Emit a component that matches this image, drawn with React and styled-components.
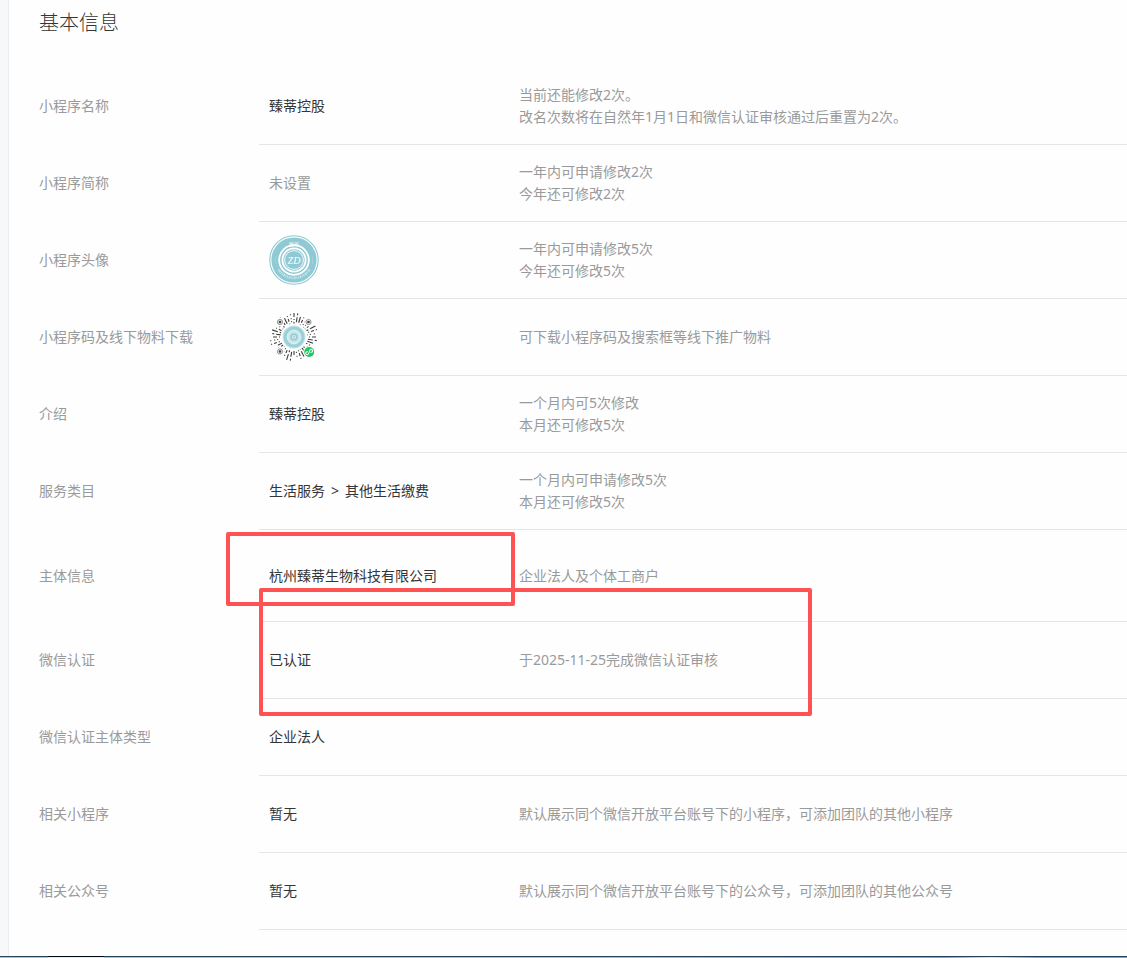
import React from 'react'

import styled, { createGlobalStyle } from 'styled-components'

const GlobalStyle = createGlobalStyle`
  * {
    box-sizing: border-box;
  }
  body {
    margin: 0;
    background: #f7f8fa;
    color: #353535;
    font: 14px/22px 'Noto Sans', 'Noto Sans CJK SC', sans-serif;
  }
`

const Page = styled.div`
  display: flex;
  flex-direction: column;
  min-height: 100vh;
`

const Panel = styled.main`
  flex: 1;
  margin-left: 8px;
  padding: 8px 0 26px 30px;
  border-left: 1px solid #ebedf0;
  background: #fefefe;
`

const Title = styled.h1`
  margin: 0 0 30px;
  font-size: 20px;
  line-height: 30px;
  font-weight: 300;
`

const List = styled.dl`
  margin: 0;
`

const Row = styled.div`
  display: flex;
  align-items: stretch;
  min-height: ${(props) => (props.$tall ? 92 : 77)}px;
`

const Label = styled.dt`
  width: 220px;
  flex: none;
  display: flex;
  align-items: center;
  border-bottom: 1px solid transparent;
  color: #9a9a9a;
`

const Value = styled.dd`
  position: relative;
  width: 250px;
  flex: none;
  margin: 0;
  padding: 0 10px;
  display: flex;
  align-items: center;
  border-bottom: 1px solid #e4e5e8;
  color: ${(props) => (props.$muted ? '#9a9a9a' : '#353535')};
`

const Separator = styled.span`
  margin: 0 6px;
`

const Note = styled.dd`
  flex: 1;
  min-width: 1px;
  margin: 0;
  padding-left: 10px;
  display: flex;
  flex-direction: column;
  justify-content: center;
  border-bottom: 1px solid #e4e5e8;
  color: #9a9a9a;
`

const Mark = styled.span`
  position: absolute;
  z-index: 1;
  top: ${(props) => props.$top}px;
  left: ${(props) => props.$left}px;
  width: ${(props) => props.$width}px;
  height: ${(props) => props.$height}px;
  border: 4px solid #ff5252;
  border-radius: 2px;
  pointer-events: none;
`

const Edge = styled.footer`
  display: flex;
  height: 2px;
  border-top: 1px solid #24445a;
  background: linear-gradient(90deg, #9fc9d6, #a5c5dd 50%, #7aa3cf 84%, #dbe7ee 88%, #7aa3cf 92%);
`

const EdgeTab = styled.span`
  width: 56px;
  height: 2px;
  margin: -1px 0 0 48px;
  border-top: 1px solid #05090c;
  background: #dfeef5;
`

const Logo = () => (
  <svg width="50" height="50" viewBox="0 0 50 50" role="img" aria-label="小程序头像">
    <circle cx="25" cy="25" r="24.2" fill="#fff" stroke="#8fc9d3" strokeWidth="1.1" />
    <circle cx="25" cy="25" r="22.6" fill="#8fc9d3" />
    <circle cx="25" cy="25" r="14.8" fill="none" stroke="#fff" strokeWidth="1.8" />
    <circle cx="25" cy="25" r="11.6" fill="none" stroke="#fff" strokeWidth="1.8" />
    <circle cx="25" cy="25" r="9.4" fill="none" stroke="#fff" strokeWidth="0.9" />
    {/* lettering round the lower half of the band */}
    <path
      d="M9.500 34.500a18.500 18.500 0 0 0 31 0"
      fill="none"
      stroke="#c9e6eb"
      strokeWidth="2.6"
      strokeDasharray="1 0.8 1.4 0.7 0.8 0.9"
    />
    <path
      d="M6.500 22v7M43.500 22v7"
      stroke="#b5dde3"
      strokeWidth="0.8"
      strokeDasharray="1 1"
    />
    <text
      x="25"
      y="10.500"
      textAnchor="middle"
      fontSize="5"
      fill="#fff"
      fontFamily="Noto Sans CJK SC"
    >
      臻蒂
    </text>
    <text
      x="25"
      y="28.500"
      textAnchor="middle"
      fontSize="10"
      fontStyle="italic"
      fill="#fff"
      fontFamily="Liberation Serif"
    >
      ZD
    </text>
  </svg>
)

const rays = Array.from({ length: 40 }, (_, i) => ({
  angle: i * 9,
  dash: ['4 2 1 2', '1 2 3 2', '2 2 5 2', '1 3 1 2', '6 2 2 1'][(i * 7) % 5],
  end: [24, 20, 22, 24, 18, 23, 21][(i * 3) % 7],
}))

const Code = () => (
  <svg width="50" height="50" viewBox="0 0 50 50" role="img" aria-label="小程序码">
    <g stroke="#3c3c3c" strokeWidth="1.1" strokeLinecap="butt">
      {rays.map(({ angle, dash, end }) => (
        <line
          key={angle}
          x1="25"
          y1={25 - end}
          x2="25"
          y2="11.500"
          strokeDasharray={dash}
          transform={`rotate(${angle} 25 25)`}
        />
      ))}
    </g>
    {[[11, 10], [39.5, 10], [11, 39.5]].map(([x, y]) => (
      <g key={`${x}-${y}`}>
        <circle cx={x} cy={y} r="4.200" fill="#fff" />
        <circle cx={x} cy={y} r="2.600" fill="#eee" stroke="#888" strokeWidth="0.9" />
        <circle cx={x} cy={y} r="1.300" fill="#444" />
      </g>
    ))}
    <circle cx="25" cy="25" r="12.500" fill="#fff" />
    <circle cx="25" cy="25" r="11.500" fill="#c6e5ea" />
    <circle cx="25" cy="25" r="9" fill="none" stroke="#9bd0d9" strokeWidth="3" />
    <circle cx="25" cy="25" r="6.300" fill="none" stroke="#e4f4f6" />
    <circle cx="25" cy="25" r="3.800" fill="#8fc9d3" stroke="#b5dde3" />
    <circle cx="25" cy="25" r="1.700" fill="#a9d8df" stroke="#e4f4f6" strokeWidth="0.7" />
    <circle cx="40.200" cy="40" r="6" fill="#fff" />
    <circle cx="40.200" cy="40" r="5" fill="#1ec760" />
    <path
      d="M38.500 40.300a1.500 1.500 0 1 0 1.700 1.500v-3.600a1.500 1.500 0 1 1 1.700 1.500"
      transform="rotate(20 40.200 40)"
      fill="none"
      stroke="#fff"
      strokeWidth="1"
      strokeLinecap="round"
    />
  </svg>
)

const rows = [
  {
    label: '小程序名称',
    value: '臻蒂控股',
    notes: ['当前还能修改2次。', '改名次数将在自然年1月1日和微信认证审核通过后重置为2次。'],
  },
  {
    label: '小程序简称',
    value: '未设置',
    muted: true,
    notes: ['一年内可申请修改2次', '今年还可修改2次'],
  },
  { label: '小程序头像', value: <Logo />, notes: ['一年内可申请修改5次', '今年还可修改5次'] },
  { label: '小程序码及线下物料下载', value: <Code />, notes: ['可下载小程序码及搜索框等线下推广物料'] },
  { label: '介绍', value: '臻蒂控股', notes: ['一个月内可5次修改', '本月还可修改5次'] },
  {
    label: '服务类目',
    value: (
      <span>
        生活服务<Separator>&gt;</Separator>其他生活缴费
      </span>
    ),
    notes: ['一个月内可申请修改5次', '本月还可修改5次'],
  },
  {
    label: '主体信息',
    value: '杭州臻蒂生物科技有限公司',
    tall: true,
    notes: ['企业法人及个体工商户'],
    mark: { $top: 2, $left: -33, $width: 289, $height: 74 },
  },
  {
    label: '微信认证',
    value: '已认证',
    notes: ['于2025-11-25完成微信认证审核'],
    mark: { $top: -34, $left: 0, $width: 553, $height: 128 },
  },
  { label: '微信认证主体类型', value: '企业法人', notes: [] },
  {
    label: '相关小程序',
    value: '暂无',
    notes: ['默认展示同个微信开放平台账号下的小程序，可添加团队的其他小程序'],
  },
  {
    label: '相关公众号',
    value: '暂无',
    notes: ['默认展示同个微信开放平台账号下的公众号，可添加团队的其他公众号'],
  },
]

export default function App() {
  return (
    <Page>
      <GlobalStyle />
      <Panel>
        <Title>基本信息</Title>
        <List>
          {rows.map(({ label, value, muted, tall, notes, mark }) => (
            <Row key={label} $tall={tall}>
              <Label>{label}</Label>
              <Value $muted={muted}>
                {value}
                {mark && <Mark {...mark} />}
              </Value>
              <Note>
                {notes.map((note) => (
                  <span key={note}>{note}</span>
                ))}
              </Note>
            </Row>
          ))}
        </List>
      </Panel>
      <Edge>
        <EdgeTab />
      </Edge>
    </Page>
  )
}
